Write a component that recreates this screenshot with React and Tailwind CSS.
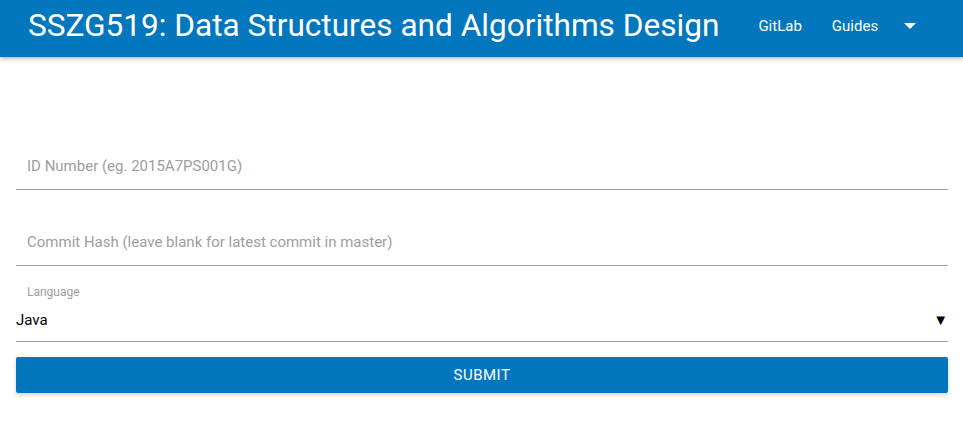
import React from "react";

const App = () => {
  return (
    <div className="min-h-[421px] bg-white font-['Roboto',sans-serif]">
      {/* Nav */}
      <nav className="h-[57px] bg-[#0277bd] shadow-[0_2px_4px_rgba(0,0,0,0.25)] flex items-center pb-[5px]">
        <a className="ml-[28px] text-white text-[31.6px] leading-none">
          SSZG519: Data Structures and Algorithms Design
        </a>
        <ul className="ml-[24px] flex items-center text-white text-[15px]">
          <li className="px-[15px]">GitLab</li>
          <li className="px-[15px]">Guides</li>
          <li className="pl-[5px]">
            <svg width="24" height="24" viewBox="0 0 24 24" fill="white">
              <path d="M6 9l6 6 6-6z" />
            </svg>
          </li>
        </ul>
      </nav>

      {/* Form */}
      <form className="pl-4 pr-[15px]">
        <input
          type="text"
          placeholder="ID Number (eg. 2015A7PS001G)"
          className="mt-[85px] block w-full h-12 pl-[11px] border-b border-[#9e9e9e] text-[15px] outline-none placeholder:text-[#9e9e9e]"
        />
        <input
          type="text"
          placeholder="Commit Hash (leave blank for latest commit in master)"
          className="mt-[28px] block w-full h-12 pl-[11px] border-b border-[#9e9e9e] text-[15px] outline-none placeholder:text-[#9e9e9e]"
        />
        <div className="mt-[19px] pl-[11px] text-[12px] leading-[14px] text-[#9e9e9e]">
          Language
        </div>
        <div className="h-[43px] flex items-center justify-between border-b border-[#9e9e9e] text-[15px] text-black">
          <span>Java</span>
          <span className="text-[15px] leading-none">▼</span>
        </div>
        <button
          type="button"
          className="mt-[15px] w-full h-9 rounded-[2px] bg-[#0277bd] text-white text-[15px] tracking-[0.5px] shadow-[0_2px_5px_rgba(0,0,0,0.18)]"
        >
          SUBMIT
        </button>
      </form>
    </div>
  );
};

export default App;
